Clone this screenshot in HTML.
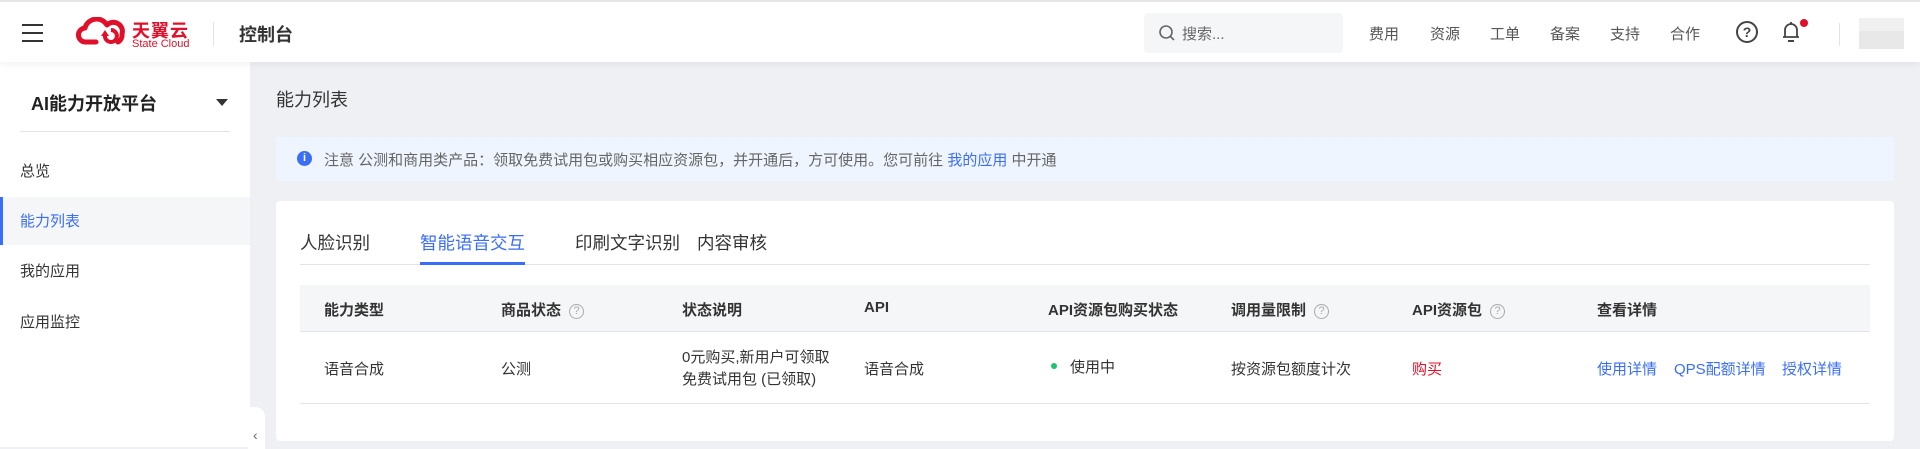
<!DOCTYPE html>
<html><head><meta charset="utf-8"><style>
*{margin:0;padding:0;box-sizing:border-box}
body{width:1920px;height:447px;overflow:hidden;background:#eff0f4;font-family:"Liberation Sans","Noto Sans CJK SC",sans-serif;color:#333;position:relative}
.a{position:absolute;white-space:nowrap}
.hdr{position:absolute;left:0;top:0;width:1920px;height:62px;background:#fff;border-top:2px solid #e6e6e6;box-shadow:0 2px 8px rgba(0,0,0,.06);z-index:2}
.side{position:absolute;left:0;top:62px;width:250px;height:385px;background:#fff}
.nav{font-size:15px;color:#555}
.card{position:absolute;left:276px;top:201px;width:1618px;height:240px;background:#fff;border-radius:4px}
.th{font-size:15px;font-weight:bold;color:#333}
.td{font-size:15px;color:#333}
.q{display:inline-block;width:15px;height:15px;border:1px solid #aaa;border-radius:50%;font-size:11px;color:#aaa;text-align:center;line-height:13px;margin-left:8px;vertical-align:1px;font-weight:normal}
.lk{color:#3b6ef6;font-size:15px}
</style></head><body>
<div class="hdr">
  <div class="a" style="left:22px;top:22px;width:21px;height:2px;background:#333;box-shadow:0 8px 0 #333,0 16px 0 #333"></div>
  <svg class="a" style="left:76px;top:15px" width="52" height="30" viewBox="0 0 52 30"><path d="M20 25 H10 A7 7 0 0 1 9 11 A12 12 0 0 1 31 8 A9 9 0 0 1 46 17 A8 8 0 0 1 42 25" fill="none" stroke="#e0102a" stroke-width="5" stroke-linecap="round" stroke-linejoin="round"/><path d="M29 18 A6 6 0 1 0 35 13" fill="none" stroke="#e0102a" stroke-width="4"/><path d="M25 19 L33 19 L29 13 Z" fill="#e0102a"/></svg>
  <div class="a" style="left:132px;top:15px;font-size:18px;font-weight:bold;color:#e0102a;letter-spacing:1px">天翼云</div>
  <div class="a" style="left:132px;top:36px;font-size:11px;color:#e0102a">State Cloud</div>
  <div class="a" style="left:213px;top:20px;width:1px;height:24px;background:#e3e3e3"></div>
  <div class="a" style="left:239px;top:19px;font-size:18px;font-weight:bold;color:#333">控制台</div>
  <div class="a" style="left:1144px;top:11px;width:199px;height:40px;background:#f5f6f8;border-radius:4px"></div>
  <svg class="a" style="left:1158px;top:22px" width="18" height="18" viewBox="0 0 18 18"><circle cx="8" cy="8" r="6" fill="none" stroke="#666" stroke-width="1.6"/><path d="M12 12 L16 16" stroke="#666" stroke-width="1.6"/></svg>
  <div class="a" style="left:1182px;top:21px;font-size:15px;color:#666">搜索...</div>
  <div class="a nav" style="left:1369px;top:21px">费用</div>
  <div class="a nav" style="left:1430px;top:21px">资源</div>
  <div class="a nav" style="left:1490px;top:21px">工单</div>
  <div class="a nav" style="left:1550px;top:21px">备案</div>
  <div class="a nav" style="left:1610px;top:21px">支持</div>
  <div class="a nav" style="left:1670px;top:21px">合作</div>
  <div class="a" style="left:1736px;top:19px;width:22px;height:22px;border:2px solid #444;border-radius:50%;font-size:14px;font-weight:bold;text-align:center;line-height:18px;color:#444">?</div>
  <svg class="a" style="left:1781px;top:18px" width="20" height="24" viewBox="0 0 20 24"><path d="M4 17 V10 A6 6 0 0 1 16 10 V17 Z M2 17 H18 M10 2 V4" fill="none" stroke="#444" stroke-width="1.8"/><path d="M7 21 H13" stroke="#444" stroke-width="2"/></svg>
  <div class="a" style="left:1800px;top:17px;width:8px;height:8px;border-radius:50%;background:#e0102a"></div>
  <div class="a" style="left:1839px;top:21px;width:1px;height:23px;background:#e3e3e3"></div>
  <div class="a" style="left:1859px;top:16px;width:45px;height:31px;background:#e8e8e8"></div>
  <div class="a" style="left:1859px;top:16px;width:45px;height:13px;background:#f0f0f0"></div>
</div>
<div class="side">
  <div class="a" style="left:31px;top:28px;font-size:18px;font-weight:bold;color:#222">AI能力开放平台</div>
  <div class="a" style="left:216px;top:37px;border-left:6px solid transparent;border-right:6px solid transparent;border-top:7px solid #333"></div>
  <div class="a" style="left:20px;top:69px;width:210px;height:1px;background:#e3e3e3"></div>
  <div class="a" style="left:20px;top:98px;font-size:15px">总览</div>
  <div class="a" style="left:0;top:135px;width:250px;height:48px;background:#f5f6f8"></div>
  <div class="a" style="left:0;top:135px;width:3px;height:48px;background:#3b6ef6"></div>
  <div class="a" style="left:20px;top:148px;font-size:15px;color:#3b6ef6">能力列表</div>
  <div class="a" style="left:20px;top:198px;font-size:15px">我的应用</div>
  <div class="a" style="left:20px;top:249px;font-size:15px">应用监控</div>
</div>
<div class="a" style="left:248px;top:407px;width:17px;height:42px;background:#fff;border-radius:0 10px 0 0"></div>
<div class="a" style="left:253px;top:427px;font-size:14px;color:#666">&lsaquo;</div>
<div class="a" style="left:276px;top:86px;font-size:18px;color:#333">能力列表</div>
<div class="a" style="left:276px;top:137px;width:1618px;height:44px;background:#eef5fe"></div>
<div class="a" style="left:297px;top:151px;width:15px;height:15px;border-radius:50%;background:#3b6ef6;color:#fff;font-size:11px;font-weight:bold;text-align:center;line-height:15px">i</div>
<div class="a" style="left:324px;top:149px;font-size:15px;color:#666">注意 公测和商用类产品：领取免费试用包或购买相应资源包，并开通后，方可使用。您可前往 <span style="color:#3b6ef6">我的应用</span> 中开通</div>
<div class="card"></div>
<div class="a" style="left:300px;top:230px;font-size:17.5px;color:#333">人脸识别</div>
<div class="a" style="left:420px;top:230px;font-size:17.5px;color:#3b6ef6">智能语音交互</div>
<div class="a" style="left:575px;top:230px;font-size:17.5px;color:#333">印刷文字识别</div>
<div class="a" style="left:697px;top:230px;font-size:17.5px;color:#333">内容审核</div>
<div class="a" style="left:300px;top:264px;width:1570px;height:1px;background:#e3e3e6"></div>
<div class="a" style="left:420px;top:262px;width:105px;height:3px;background:#3b6ef6"></div>
<div class="a" style="left:300px;top:285px;width:1570px;height:47px;background:#f5f6f8;border-bottom:1px solid #e3e3ea"></div>
<div class="a th" style="left:324px;top:299px">能力类型</div>
<div class="a th" style="left:501px;top:299px">商品状态<span class="q">?</span></div>
<div class="a th" style="left:682px;top:299px">状态说明</div>
<div class="a th" style="left:864px;top:299px">API</div>
<div class="a th" style="left:1048px;top:299px">API资源包购买状态</div>
<div class="a th" style="left:1231px;top:299px">调用量限制<span class="q">?</span></div>
<div class="a th" style="left:1412px;top:299px">API资源包<span class="q">?</span></div>
<div class="a th" style="left:1597px;top:299px">查看详情</div>
<div class="a td" style="left:324px;top:358px">语音合成</div>
<div class="a td" style="left:501px;top:358px">公测</div>
<div class="a td" style="left:682px;top:347px;line-height:22px">0元购买,新用户可领取<br>免费试用包 (已领取)</div>
<div class="a td" style="left:864px;top:358px">语音合成</div>
<div class="a" style="left:1051px;top:363px;width:6px;height:6px;border-radius:50%;background:#1ec36b"></div>
<div class="a td" style="left:1070px;top:356px">使用中</div>
<div class="a td" style="left:1231px;top:358px">按资源包额度计次</div>
<div class="a" style="left:1412px;top:358px;font-size:15px;color:#e0102a">购买</div>
<div class="a lk" style="left:1597px;top:358px">使用详情</div>
<div class="a lk" style="left:1674px;top:358px">QPS配额详情</div>
<div class="a lk" style="left:1782px;top:358px">授权详情</div>
<div class="a" style="left:300px;top:403px;width:1570px;height:1px;background:#e3e3ea"></div>
</body></html>
